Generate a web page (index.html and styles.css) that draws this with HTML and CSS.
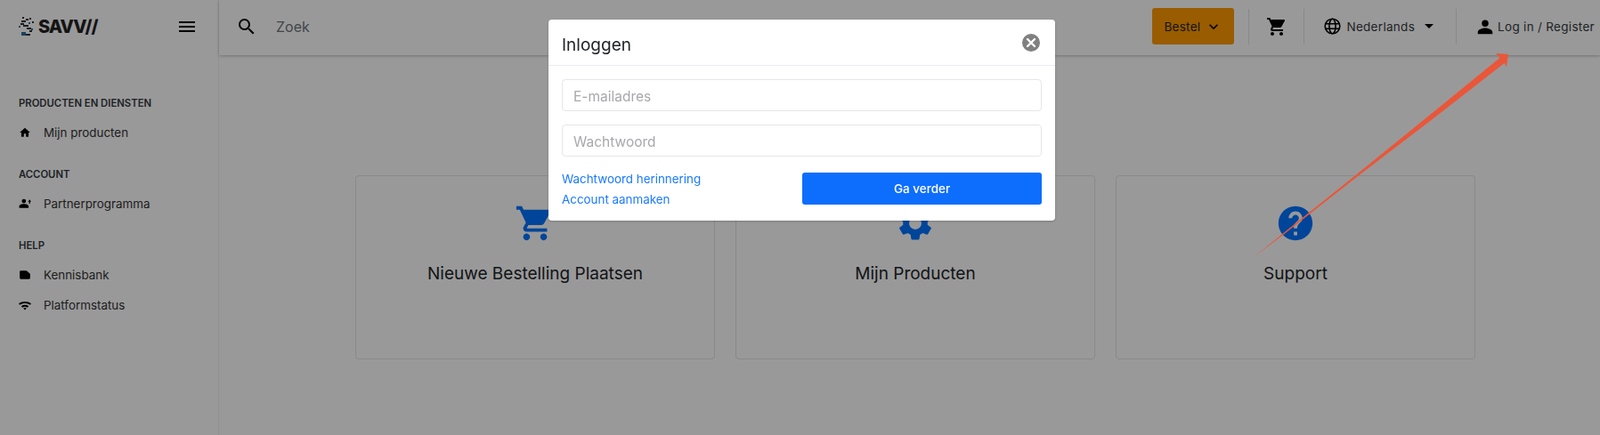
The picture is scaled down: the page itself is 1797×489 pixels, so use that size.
FILE: index.html
```html
<!DOCTYPE html>
<html lang="nl">
<head>
<meta charset="utf-8">
<title>Inloggen</title>
<link rel="stylesheet" href="styles.css">
</head>
<body>
<div class="app">
  <aside class="sidebar">
    <div class="brand">
      <svg class="brand-mark" viewBox="0 0 18 22" width="18" height="22">
        <g fill="#333"><rect x="4" y="0" width="2" height="2"/><rect x="8" y="2" width="3" height="2"/><rect x="3" y="4" width="5" height="2"/><rect x="12" y="1" width="2" height="2"/><rect x="2" y="7" width="4" height="2"/><rect x="5" y="9" width="6" height="2"/><rect x="15" y="5" width="2" height="2"/><rect x="9" y="12" width="5" height="2"/><rect x="12" y="15" width="3" height="2"/><rect x="7" y="19" width="6" height="2"/></g>
        <g fill="#2b6f9e"><rect x="0" y="10" width="2" height="2"/><rect x="11" y="6" width="2" height="2"/><rect x="3" y="17" width="5" height="4"/><rect x="14" y="13" width="2" height="2"/></g>
      </svg>
      <span class="brand-name">SAVV//</span>
      <svg class="menu-icon" viewBox="0 0 18 12" width="18" height="12"><path d="M0 0h18v2H0zM0 5h18v2H0zM0 10h18v2H0z"/></svg>
    </div>
    <nav class="nav">
      <section class="nav-group">
        <h2 class="nav-title">PRODUCTEN EN DIENSTEN</h2>
        <a class="nav-item"><svg class="nav-icon" viewBox="0 0 24 24"><path d="M10 20v-6h4v6h5v-8h3L12 3 2 12h3v8z"/></svg>Mijn producten</a>
      </section>
      <section class="nav-group">
        <h2 class="nav-title">ACCOUNT</h2>
        <a class="nav-item"><svg class="nav-icon" viewBox="0 0 24 24"><path d="M10 11a4 4 0 1 0 0-8 4 4 0 0 0 0 8zM1 20v-3c0-3 5-4.500 9-4.500s9 1.500 9 4.500v3zM20 12V8h-2l3-4 3 4h-2v4z"/></svg>Partnerprogramma</a>
      </section>
      <section class="nav-group">
        <h2 class="nav-title">HELP</h2>
        <a class="nav-item"><svg class="nav-icon" viewBox="0 0 24 24"><path d="M2 6a2 2 0 0 1 2-2h11l7 6v8a2 2 0 0 1-2 2H4a2 2 0 0 1-2-2z"/></svg>Kennisbank</a>
        <a class="nav-item"><svg class="nav-icon" viewBox="0 0 24 24"><path d="M0 9c7-5 17-5 24 0l-2 2.500c-6-4-14-4-20 0zM5 14c4-3 10-3 14 0l-2 2.500c-3-2-7-2-10 0zM9 18c2-1 4-1 6 0l-3 3.500z"/></svg>Platformstatus</a>
      </section>
    </nav>
  </aside>
  <div class="content">
    <header class="topbar">
      <svg class="search-icon" viewBox="0 0 24 24"><path d="M15.500 14h-.79l-.28-.27A6.471 6.471 0 0 0 16 9.500 6.500 6.500 0 1 0 9.500 16c1.610 0 3.090-.59 4.230-1.570l.27.28v.79l5 4.990L20.490 19l-4.990-5zm-6 0C7.010 14 5 11.990 5 9.500S7.010 5 9.500 5 14 7.010 14 9.500 11.990 14 9.500 14z"/></svg>
      <span class="search-text">Zoek</span>
      <button class="order-btn">Bestel<svg class="order-chevron" viewBox="0 0 24 24"><path d="M7.410 8.590 12 13.170l4.590-4.580L18 10l-6 6-6-6z"/></svg></button>
      <span class="top-sep sep-a"></span>
      <svg class="top-cart" viewBox="0 0 24 24"><path d="M7 18c-1.100 0-1.990.9-1.990 2S5.900 22 7 22s2-.9 2-2-.9-2-2-2zM1 2v2h2l3.600 7.590-1.350 2.450c-.16.28-.25.61-.25.96 0 1.100.9 2 2 2h12v-2H7.420c-.14 0-.25-.11-.25-.25l.03-.12.9-1.630h7.450c.75 0 1.410-.41 1.750-1.030l3.580-6.490c.08-.14.12-.31.12-.48 0-.55-.45-1-1-1H5.210l-.94-2H1zm16 16c-1.100 0-1.990.9-1.990 2s.89 2 1.990 2 2-.9 2-2-.9-2-2-2z"/></svg>
      <span class="top-sep sep-b"></span>
      <svg class="globe" viewBox="0 0 24 24" fill="none" stroke="#000" stroke-width="2"><circle cx="12" cy="12" r="10.500"/><ellipse cx="12" cy="12" rx="4.500" ry="10.500"/><path d="M2 8.500h20M2 15.500h20"/></svg>
      <span class="lang">Nederlands</span>
      <svg class="caret" viewBox="0 0 10 5"><path d="M0 0h10L5 5z"/></svg>
      <span class="top-sep sep-c"></span>
      <svg class="user" viewBox="0 0 24 24"><path d="M12 12a5 5 0 1 0 0-10 5 5 0 0 0 0 10zm0 2c-4 0-11 2-11 6v3h22v-3c0-4-7-6-11-6z"/></svg>
      <span class="login">Log in / Register</span>
    </header>
    <main class="cards">
      <article class="card">
        <svg class="card-icon" viewBox="0 0 24 24"><path d="M7 18c-1.100 0-1.990.9-1.990 2S5.900 22 7 22s2-.9 2-2-.9-2-2-2zM1 2v2h2l3.600 7.590-1.350 2.450c-.16.28-.25.61-.25.96 0 1.100.9 2 2 2h12v-2H7.420c-.14 0-.25-.11-.25-.25l.03-.12.9-1.630h7.450c.75 0 1.410-.41 1.750-1.030l3.580-6.490c.08-.14.12-.31.12-.48 0-.55-.45-1-1-1H5.210l-.94-2H1zm16 16c-1.100 0-1.990.9-1.990 2s.89 2 1.990 2 2-.9 2-2-.9-2-2-2z"/></svg>
        <h3 class="card-title">Nieuwe Bestelling Plaatsen</h3>
      </article>
      <article class="card">
        <svg class="card-icon" viewBox="0 0 24 24"><path d="M19.140 12.940c.04-.3.06-.61.06-.94 0-.32-.02-.64-.07-.94l2.030-1.580c.18-.14.23-.41.12-.61l-1.920-3.320c-.12-.22-.37-.29-.59-.22l-2.390.96c-.5-.38-1.030-.7-1.620-.94l-.36-2.540c-.04-.24-.24-.41-.48-.41h-3.840c-.24 0-.43.17-.47.41l-.36 2.540c-.59.24-1.130.57-1.620.94l-2.390-.96c-.22-.08-.47 0-.59.22L2.740 8.870c-.12.21-.08.47.12.61l2.030 1.580c-.05.3-.09.63-.09.94s.02.64.07.94l-2.030 1.580c-.18.14-.23.41-.12.61l1.920 3.320c.12.22.37.29.59.22l2.390-.96c.5.38 1.030.7 1.620.94l.36 2.540c.05.24.24.41.48.41h3.840c.24 0 .44-.17.47-.41l.36-2.540c.59-.24 1.130-.56 1.620-.94l2.390.96c.22.08.47 0 .59-.22l1.920-3.320c.12-.22.07-.47-.12-.61l-2.010-1.580zM12 15.600c-1.980 0-3.600-1.620-3.600-3.600s1.620-3.600 3.600-3.600 3.600 1.620 3.600 3.600-1.620 3.600-3.600 3.600z"/></svg>
        <h3 class="card-title">Mijn Producten</h3>
      </article>
      <article class="card">
        <svg class="card-icon" viewBox="0 0 24 24"><path d="M12 2C6.480 2 2 6.480 2 12s4.480 10 10 10 10-4.480 10-10S17.520 2 12 2zm1 17h-2v-2h2v2zm2.070-7.750l-.9.92C13.450 12.900 13 13.500 13 15h-2v-.5c0-1.100.45-2.100 1.170-2.830l1.240-1.260c.37-.36.59-.86.59-1.410 0-1.100-.9-2-2-2s-2 .9-2 2H8c0-2.210 1.790-4 4-4s4 1.790 4 4c0 .88-.36 1.680-.93 2.250z"/></svg>
        <h3 class="card-title">Support</h3>
      </article>
    </main>
  </div>
</div>

<div class="backdrop"></div>

<div class="modal-layer">
  <form class="modal">
    <div class="modal-head">
      <span class="modal-title">Inloggen</span>
      <svg class="modal-close" viewBox="0 0 20 20"><circle cx="10" cy="10" r="10" fill="#808080"/><path d="M6 6l8 8M14 6l-8 8" stroke="#fff" stroke-width="2.400" stroke-linecap="round"/></svg>
    </div>
    <div class="modal-body">
      <input class="field" type="text" placeholder="E-mailadres">
      <input class="field" type="text" placeholder="Wachtwoord">
      <div class="modal-foot">
        <div class="links">
          <a class="link">Wachtwoord herinnering</a>
          <a class="link">Account aanmaken</a>
        </div>
        <button class="submit" type="button">Ga verder</button>
      </div>
    </div>
  </form>
</div>

<svg class="arrow" width="1797" height="489" viewBox="0 0 1797 489">
  <path d="M1407 290 L1440.500 264.500 L1525.700 197.400 L1611.700 131.700 L1689.500 71 L1692 75 L1694 61 L1680 60 L1684.500 65 L1608.300 127.300 L1524.300 195.600 L1439.500 263.500 Z" fill="#ea5639"/>
</svg>
</body>
</html>
```
FILE: styles.css
```css
* { box-sizing: border-box; }
html, body { height: 100%; }
body {
  margin: 0;
  background: #fff;
  color: #212529;
  font-family: Inter, "Noto Sans", sans-serif;
  overflow: hidden;
}
h2, h3 { margin: 0; }

.app { display: flex; height: 489px; }

.sidebar {
  width: 246px;
  flex: none;
  border-right: 1px solid #f2f2f2;
}
.brand {
  display: flex;
  align-items: center;
  height: 62px;
  padding: 0 26px 3px 21px;
}
.brand-mark { flex: none; margin-right: 4px; }
.brand-name {
  font-size: 20px;
  font-weight: 800;
  letter-spacing: -1px;
  color: #222;
  line-height: 1;
}
.menu-icon { margin-left: auto; fill: #000; }

.nav { padding-top: 45px; }
.nav-group { margin-bottom: 21px; }
.nav-title {
  padding-left: 21px;
  font-size: 11.300px;
  font-weight: 600;
  line-height: 18px;
  color: #343a40;
}
.nav-item {
  display: flex;
  align-items: center;
  height: 34px;
  margin-top: 7px;
  padding-left: 21px;
  font-size: 13.400px;
  color: #333;
}
.nav-item + .nav-item { margin-top: 0; }
.nav-icon { width: 14px; height: 14px; margin-right: 14px; fill: #000; flex: none; }

.content { flex: 1; min-width: 0; }

.topbar {
  display: flex;
  align-items: center;
  height: 62px;
  padding: 0 6px 3px 19px;
  background: #fff;
  box-shadow: 0 1px 3px rgba(0, 0, 0, .25);
}
.search-icon { width: 24px; height: 24px; fill: #000; flex: none; }
.search-text { margin-left: 21px; font-size: 16px; color: #6c757d; }

.order-btn {
  display: flex;
  align-items: center;
  justify-content: center;
  width: 92px;
  height: 41px;
  margin-left: auto;
  border: 0;
  border-radius: 3px;
  background: #ff9900;
  color: #212529;
  font: 400 13.500px Inter, sans-serif;
  letter-spacing: .3px;
}
.order-chevron { width: 20px; height: 20px; margin-left: 5px; fill: #000; }
.top-sep { width: 1px; height: 40px; background: #e4e4e4; flex: none; }
.sep-a { margin-left: 16px; }
.top-cart { width: 24px; height: 24px; margin-left: 19px; fill: #000; flex: none; }
.sep-b { margin-left: 18px; }
.globe { width: 19px; height: 19px; margin-left: 22px; flex: none; }
.lang { margin-left: 6px; font-size: 13.500px; color: #343a40; letter-spacing: .3px; }
.caret { width: 10px; height: 5px; margin-left: 11px; fill: #000; flex: none; }
.sep-c { margin-left: 25px; }
.user { width: 18px; height: 18px; margin-left: 23px; fill: #000; flex: none; }
.login { margin-left: 5px; font-size: 13.500px; color: #343a40; letter-spacing: .3px; white-space: nowrap; }

.cards {
  display: grid;
  grid-template-columns: repeat(3, 404px);
  gap: 23px;
  padding: 135px 0 0 153px;
}
.card {
  height: 207px;
  padding-top: 30px;
  border: 1px solid #e4e4e4;
  border-radius: 4px;
  text-align: center;
}
.card-icon { display: block; width: 46px; height: 46px; margin: 0 auto; fill: #0074ff; }
.card-title {
  margin-top: 22px;
  font-size: 19px;
  font-weight: 400;
  line-height: 24px;
  color: #212529;
}

.backdrop {
  position: fixed;
  inset: 0;
  background: rgba(0, 0, 0, .4);
}

.modal-layer {
  position: fixed;
  inset: 0;
  padding: 22px 0 0 616px;
}
.modal {
  width: 569px;
  height: 226px;
  background: #fff;
  border-radius: 4px;
  box-shadow: 0 1px 3px rgba(0, 0, 0, .2);
}
.modal-head {
  display: flex;
  align-items: center;
  justify-content: space-between;
  height: 52px;
  padding: 0 17px 0 15px;
  border-bottom: 1px solid #e9ecef;
}
.modal-title { margin-top: 6px; font-size: 19px; font-weight: 400; color: #212529; }
.modal-close { width: 20px; height: 20px; }
.modal-body { padding: 15px 15px 0; }
.field {
  display: block;
  width: 100%;
  height: 36px;
  margin-bottom: 15px;
  padding: 3px 12px 0;
  border: 1px solid #e6e6e6;
  border-radius: 4px;
  font: 400 15.500px Inter, sans-serif;
  color: #212529;
}
.field::placeholder { color: #a8a8ad; opacity: 1; }
.modal-foot {
  display: flex;
  justify-content: space-between;
  margin-top: 18px;
}
.links { display: flex; flex-direction: column; gap: 5px; margin-top: -2px; }
.link { font-size: 13.400px; line-height: 18px; color: #1a7aff; }
.submit {
  width: 269px;
  height: 36px;
  border: 0;
  border-radius: 3px;
  background: #0d6efd;
  color: #fff;
  font: 500 13.500px Inter, sans-serif;
}

.arrow { position: fixed; left: 0; top: 0; pointer-events: none; }
```
